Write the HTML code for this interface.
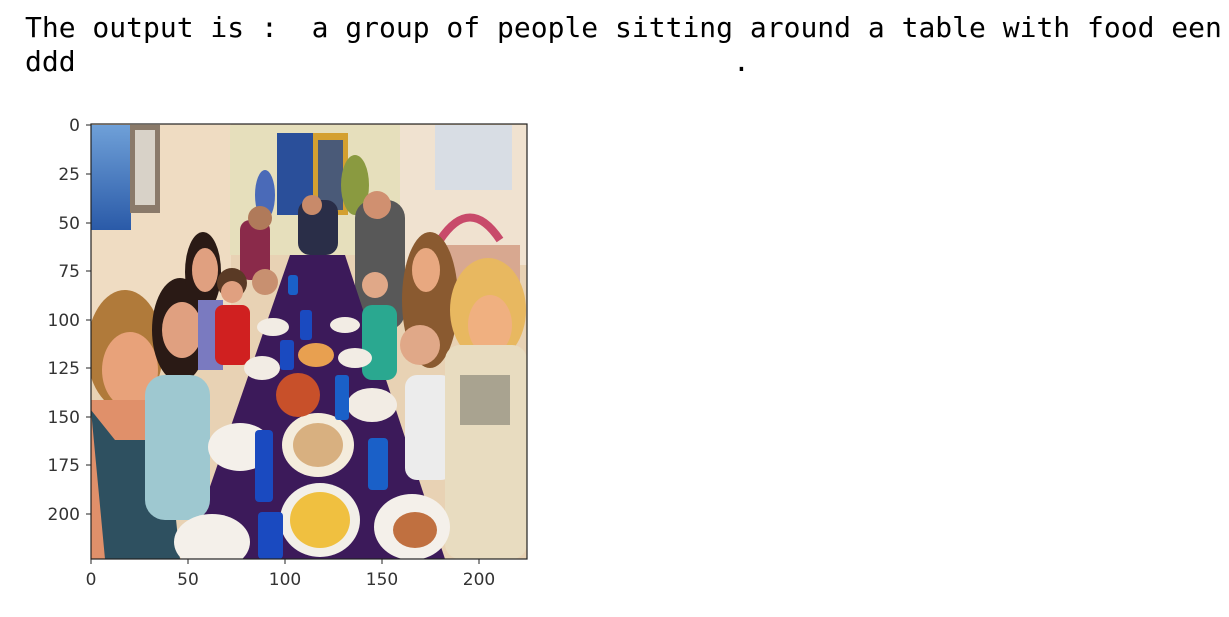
<!DOCTYPE html>
<html><head><meta charset="utf-8"><style>
html,body{margin:0;padding:0;background:#fff;width:1229px;height:617px;overflow:hidden}
.t{position:absolute;left:25px;top:11px;font-family:"DejaVu Sans Mono","Liberation Mono",monospace;font-size:28px;line-height:34px;white-space:pre;color:#000}
svg{position:absolute;left:0;top:0}
.tk{font-family:"DejaVu Sans",sans-serif;font-size:17px;fill:#333}
</style></head><body>
<div class="t">The output is :  a group of people sitting around a table with food een
ddd                                       .</div>
<svg width="1229" height="617" viewBox="0 0 1229 617">
<defs><clipPath id="c"><rect x="91" y="124" width="436" height="435"/></clipPath>
<linearGradient id="pb" x1="0" y1="0" x2="0" y2="1"><stop offset="0" stop-color="#6fa0d8"/><stop offset="1" stop-color="#2a5aa8"/></linearGradient></defs>
<g clip-path="url(#c)">
<rect x="91" y="124" width="436" height="435" fill="#e8d2b4"/>
<rect x="91" y="124" width="140" height="200" fill="#efdcc2"/>
<rect x="91" y="125" width="40" height="105" fill="url(#pb)"/>
<rect x="130" y="125" width="30" height="88" fill="#8a7a6a"/>
<rect x="135" y="130" width="20" height="75" fill="#d8d2c8"/>
<rect x="230" y="125" width="170" height="130" fill="#e6dfbc"/>
<rect x="277" y="133" width="36" height="82" fill="#2a4f9a"/>
<rect x="313" y="133" width="35" height="82" fill="#d4a030"/>
<rect x="318" y="140" width="25" height="70" fill="#4a5a78"/>
<rect x="400" y="125" width="127" height="140" fill="#f0e2d0"/>
<rect x="435" y="125" width="77" height="65" fill="#d8dde4"/>
<rect x="440" y="245" width="80" height="58" fill="#d8a890"/>
<path d="M440 240 Q470 195 500 240" stroke="#c84a6a" stroke-width="8" fill="none"/>
<ellipse cx="265" cy="195" rx="10" ry="25" fill="#4a6ab8"/>
<ellipse cx="355" cy="185" rx="14" ry="30" fill="#8a9a40"/>
<rect x="298" y="200" width="40" height="55" rx="12" fill="#2a2e48"/>
<circle cx="312" cy="205" r="10" fill="#c88a6a"/>
<rect x="240" y="220" width="30" height="60" rx="10" fill="#8a2a4a"/>
<circle cx="260" cy="218" r="12" fill="#b07a5a"/>
<rect x="355" y="200" width="50" height="130" rx="18" fill="#585858"/>
<circle cx="377" cy="205" r="14" fill="#d09070"/>
<polygon points="290,255 345,255 445,559 185,559" fill="#3c1a5a"/>
<ellipse cx="125" cy="350" rx="38" ry="60" fill="#b07a3a"/>
<ellipse cx="130" cy="370" rx="28" ry="38" fill="#e8a27a"/>
<rect x="91" y="400" width="85" height="159" fill="#e0906a"/>
<polygon points="91,410 115,440 150,440 165,410 180,559 105,559" fill="#2e5060"/>
<ellipse cx="180" cy="330" rx="28" ry="52" fill="#2a1a15"/>
<ellipse cx="182" cy="330" rx="20" ry="28" fill="#e0a080"/>
<rect x="145" y="375" width="65" height="145" rx="20" fill="#9ec8d0"/>
<ellipse cx="203" cy="272" rx="18" ry="40" fill="#2a1a15"/>
<ellipse cx="205" cy="270" rx="13" ry="22" fill="#e0a080"/>
<rect x="198" y="300" width="25" height="70" fill="#7a7ac0"/>
<circle cx="232" cy="283" r="15" fill="#5a3a25"/>
<circle cx="232" cy="292" r="11" fill="#e0a080"/>
<rect x="215" y="305" width="35" height="60" rx="8" fill="#d02020"/>
<circle cx="265" cy="282" r="13" fill="#c89070"/>
<ellipse cx="430" cy="300" rx="28" ry="68" fill="#8a5a30"/>
<ellipse cx="426" cy="270" rx="14" ry="22" fill="#e8a880"/>
<circle cx="375" cy="285" r="13" fill="#e0a888"/>
<rect x="362" y="305" width="35" height="75" rx="10" fill="#2aa890"/>
<circle cx="420" cy="345" r="20" fill="#e0a888"/>
<rect x="405" y="375" width="48" height="105" rx="12" fill="#ececec"/>
<ellipse cx="488" cy="310" rx="38" ry="52" fill="#e8b860"/>
<ellipse cx="490" cy="325" rx="22" ry="30" fill="#f0b080"/>
<rect x="445" y="345" width="82" height="214" rx="15" fill="#e8dcc0"/>
<rect x="460" y="375" width="50" height="50" fill="#6a6a60" opacity="0.5"/>
<ellipse cx="320" cy="520" rx="40" ry="37" fill="#f2efe8"/>
<ellipse cx="320" cy="520" rx="30" ry="28" fill="#f0c040"/>
<ellipse cx="412" cy="527" rx="38" ry="33" fill="#f4f0ea"/>
<ellipse cx="415" cy="530" rx="22" ry="18" fill="#c07040"/>
<ellipse cx="212" cy="542" rx="38" ry="28" fill="#f4f0ea"/>
<ellipse cx="240" cy="447" rx="32" ry="24" fill="#f4f0ea"/>
<ellipse cx="318" cy="445" rx="36" ry="32" fill="#f4ecdc"/>
<ellipse cx="318" cy="445" rx="25" ry="22" fill="#d8b080"/>
<ellipse cx="372" cy="405" rx="25" ry="17" fill="#f2ece4"/>
<ellipse cx="298" cy="395" rx="22" ry="22" fill="#c8502a"/>
<ellipse cx="262" cy="368" rx="18" ry="12" fill="#f2ece4"/>
<ellipse cx="316" cy="355" rx="18" ry="12" fill="#e8a050"/>
<ellipse cx="355" cy="358" rx="17" ry="10" fill="#f2ece4"/>
<ellipse cx="273" cy="327" rx="16" ry="9" fill="#f2ece4"/>
<ellipse cx="345" cy="325" rx="15" ry="8" fill="#f2ece4"/>
<rect x="255" y="430" width="18" height="72" rx="4" fill="#1a4ac0"/>
<rect x="258" y="512" width="25" height="47" rx="4" fill="#1a4ac0"/>
<rect x="368" y="438" width="20" height="52" rx="4" fill="#1a60c8"/>
<rect x="335" y="375" width="14" height="45" rx="3" fill="#1a60c8"/>
<rect x="280" y="340" width="14" height="30" rx="3" fill="#1a4ac0"/>
<rect x="300" y="310" width="12" height="30" rx="3" fill="#1a4ac0"/>
<rect x="288" y="275" width="10" height="20" rx="3" fill="#1a60c8"/>
</g>
<rect x="91" y="124" width="436" height="435" fill="none" stroke="#222" stroke-width="1.2"/>
<g stroke="#222" stroke-width="1">
<line x1="86" y1="125" x2="91" y2="125"/><line x1="86" y1="174" x2="91" y2="174"/><line x1="86" y1="223" x2="91" y2="223"/><line x1="86" y1="271" x2="91" y2="271"/><line x1="86" y1="320" x2="91" y2="320"/><line x1="86" y1="368" x2="91" y2="368"/><line x1="86" y1="417" x2="91" y2="417"/><line x1="86" y1="465" x2="91" y2="465"/><line x1="86" y1="514" x2="91" y2="514"/>
<line x1="91" y1="559" x2="91" y2="564"/><line x1="188" y1="559" x2="188" y2="564"/><line x1="285" y1="559" x2="285" y2="564"/><line x1="382" y1="559" x2="382" y2="564"/><line x1="479" y1="559" x2="479" y2="564"/>
</g>
<g class="tk" text-anchor="end">
<text x="80" y="131">0</text><text x="80" y="180">25</text><text x="80" y="229">50</text><text x="80" y="277">75</text><text x="80" y="326">100</text><text x="80" y="374">125</text><text x="80" y="423">150</text><text x="80" y="471">175</text><text x="80" y="520">200</text>
</g>
<g class="tk" text-anchor="middle">
<text x="91" y="585">0</text><text x="188" y="585">50</text><text x="285" y="585">100</text><text x="382" y="585">150</text><text x="479" y="585">200</text>
</g>
</svg>
</body></html>
